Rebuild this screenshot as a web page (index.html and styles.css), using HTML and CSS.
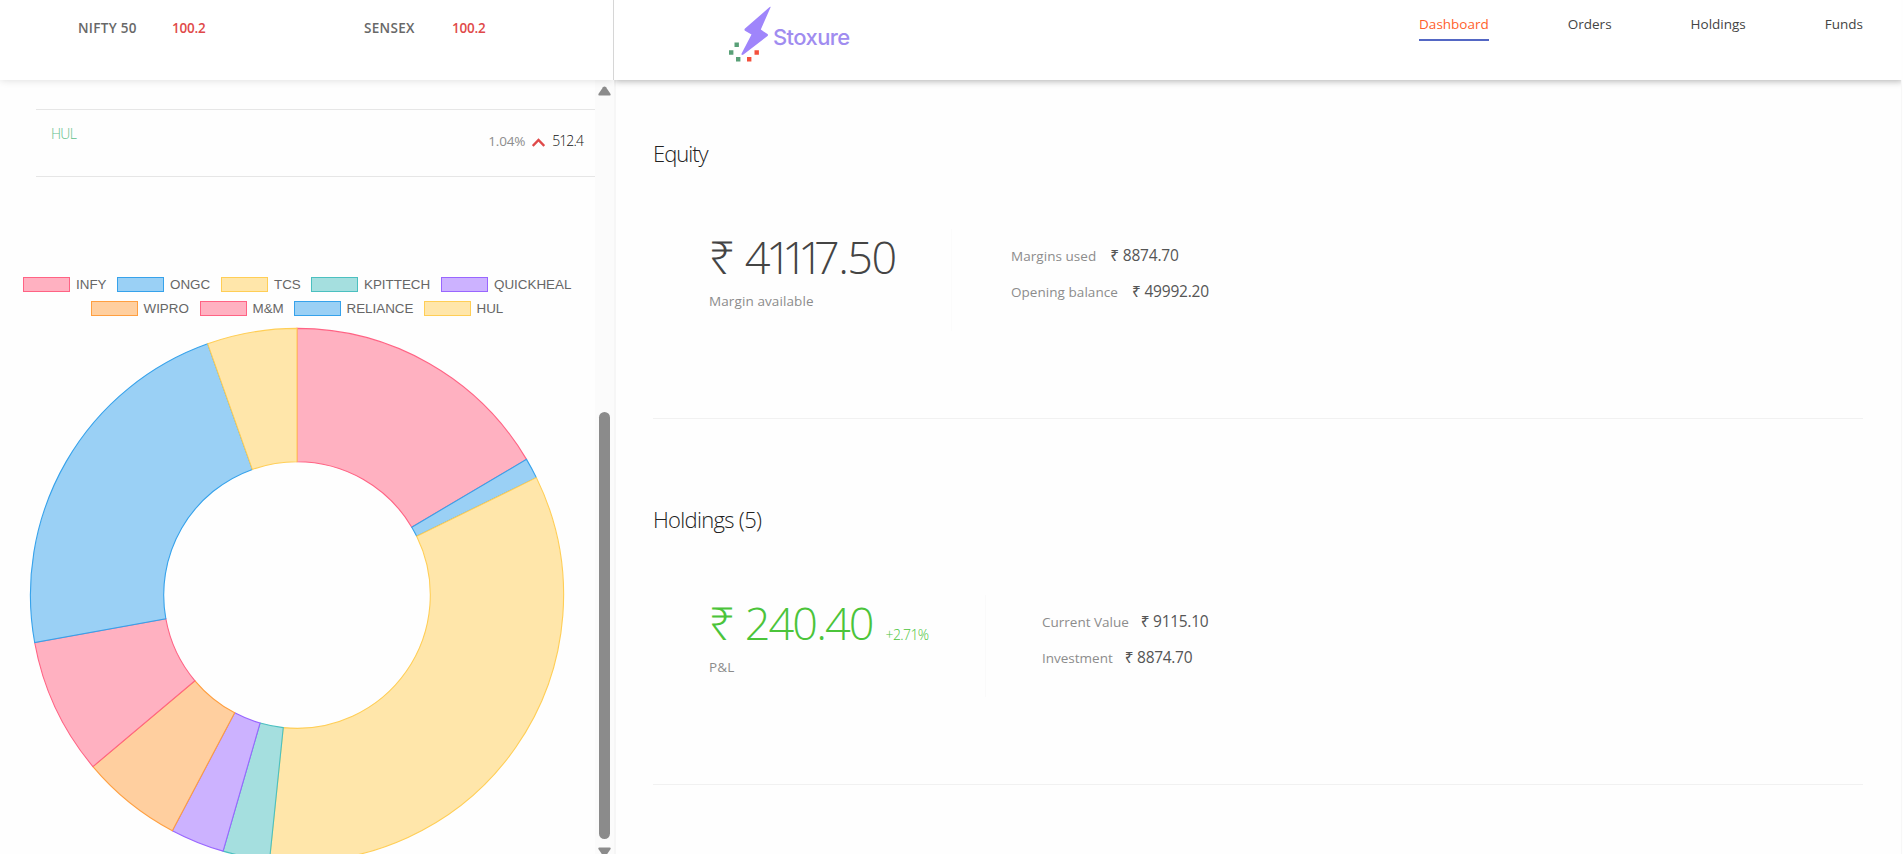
FILE: index.html
```html
<!DOCTYPE html>
<html lang="en">
<head>
<meta charset="utf-8">
<title>Stoxure</title>
<link rel="stylesheet" href="styles.css">
</head>
<body>
<div class="app">
  <aside class="side">
    <header class="indices">
      <span class="index-name nifty">NIFTY 50</span><span class="index-val">100.2</span>
      <span class="index-name sensex">SENSEX</span><span class="index-val">100.2</span>
    </header>
    <div class="side-body">
      <div class="watch">
        <div class="stock">
          <span class="stock-name">HUL</span>
          <span class="stock-pct">1.04%</span>
          <svg class="chev" width="13" height="9" viewBox="0 0 13 9"><path d="M.7 8 6.500 2l5.800 6" fill="none" stroke="#df4949" stroke-width="2.500"/></svg>
          <span class="stock-price">512.4</span>
        </div>
        <div class="legend">
          <div class="legend-row">
            <span class="key"><i class="box red"></i><b class="l-infy">INFY</b></span>
            <span class="key"><i class="box blue"></i><b class="l-ongc">ONGC</b></span>
            <span class="key"><i class="box yellow"></i><b class="l-tcs">TCS</b></span>
            <span class="key"><i class="box teal"></i><b class="l-kpit">KPITTECH</b></span>
            <span class="key"><i class="box purple"></i><b class="l-quick">QUICKHEAL</b></span>
          </div>
          <div class="legend-row second">
            <span class="key"><i class="box orange"></i><b class="l-wipro">WIPRO</b></span>
            <span class="key"><i class="box red"></i><b class="l-mm">M&amp;M</b></span>
            <span class="key"><i class="box blue"></i><b class="l-rel">RELIANCE</b></span>
            <span class="key"><i class="box yellow"></i><b class="l-hul">HUL</b></span>
          </div>
        </div>
        <svg class="donut" id="donut" width="536" height="536" viewBox="-268 -268 536 536"></svg>
      </div>
      <div class="scroll">
        <svg class="arrow-up" width="13" height="10" viewBox="0 0 13 10"><path d="M6.5.4Q7.4.4 8 1.2L12.6 8Q13 9.6 11.6 9.6H1.4Q0 9.6.4 8L5 1.2Q5.600.4 6.500.4Z" fill="#8b8b8b"/></svg>
        <div class="thumb"></div>
        <svg class="arrow-down" width="13" height="10" viewBox="0 0 13 10"><path d="M6.500 9.600Q5.600 9.600 5 8.800L.4 2Q0 .4 1.400.4H11.600Q13 .4 12.600 2L8 8.800Q7.400 9.600 6.500 9.600Z" fill="#8b8b8b"/></svg>
      </div>
    </div>
  </aside>
  <div class="main">
    <header class="topbar">
      <div class="brand">
        <svg width="42" height="60" viewBox="28 0 42 60"><path d="M70.500 7.400 60.800 29.600 67.500 34Q68.500 34.900 67.500 35.900L43.500 54.600Q41.200 55.800 41.600 53.600L51.500 34.600 45 30.800Q43.900 29.700 45 28.600L68.500 8Q71.200 5.600 70.500 7.400Z" fill="#9f85fb"/><g fill="#59a077"><path d="M34.500 42.500h4.400v4.400h-4.400zM29 50.300h4.400v4.400H29zM36 57h4.400v4.400H36z"/></g><g fill="#f4503c"><path d="M54.500 50.300h4.400v4.400h-4.400zM47 57h4.400v4.400H47z"/></g></svg>
        <span class="brand-name">Stoxure</span>
      </div>
      <nav class="nav">
        <a class="active">Dashboard</a><a>Orders</a><a>Holdings</a><a>Funds</a>
      </nav>
    </header>
    <main class="content">
      <section class="card">
        <h2 class="title t-eq">Equity</h2>
        <div class="row">
          <div class="left eq">
            <div class="amount"><span class="big"><span class="rupee">₹&nbsp;</span><span class="four">4</span><span class="ones">111</span>7.50</span></div>
            <p class="sub">Margin available</p>
          </div>
          <div class="right r1">
            <p><span class="lab">Margins used</span><span class="val">₹ 8874.70</span></p>
            <p><span class="lab">Opening balance</span><span class="val">₹ 49992.20</span></p>
          </div>
        </div>
      </section>
      <section class="card">
        <h2 class="title t-ho">Holdings (5)</h2>
        <div class="row">
          <div class="left ho">
            <div class="amount green"><span class="big b2"><span class="rupee">₹&nbsp;</span>240.40</span><span class="pct">+2.71%</span></div>
            <p class="sub pl">P&amp;L</p>
          </div>
          <div class="right r2">
            <p><span class="lab">Current Value</span><span class="val">₹ 9115.10</span></p>
            <p><span class="lab">Investment</span><span class="val">₹ 8874.70</span></p>
          </div>
        </div>
      </section>
    </main>
  </div>
</div>
<script src="chart.js"></script>
</body>
</html>
```

FILE: styles.css
```css
* { box-sizing: border-box; }
body { margin: 0; background: #fff; font-family: "Open Sans", "Noto Sans", sans-serif; overflow: hidden; }
p, h2 { margin: 0; }
.app { display: flex; width: 1903px; height: 854px; overflow: hidden; background: #fefefe; }

.side { width: 614px; flex: none; display: flex; flex-direction: column; }
.indices { height: 80px; flex: none; display: flex; align-items: flex-start; padding: 18px 0 0 78px; border-right: 1px solid #d6d6d6; background: #fff; box-shadow: 0 0 8px rgba(0,0,0,.14); position: relative; font-size: 13.500px; line-height: 20px; font-weight: 600; white-space: nowrap; clip-path: inset(0 0 -8px 0); }
.index-name { color: #686868; letter-spacing: .3px; }
.nifty { width: 94px; }
.sensex { width: 88px; }
.index-val { color: #df4949; width: 192px; letter-spacing: -.2px; }
.index-val:last-child { width: auto; }
.side-body { flex: 1; min-height: 0; display: flex; }
.watch { width: 595px; flex: none; overflow: hidden; padding-top: 29px; }
.stock { margin-left: 36px; height: 68px; border-top: 1px solid #e6e6e6; border-bottom: 1px solid #e6e6e6; display: flex; align-items: flex-start; padding: 14px 12px 0 15px; font-weight: 300; font-size: 14px; line-height: 20px; }
.stock-name { color: #5fc08b; flex: 1; letter-spacing: -.7px; }
.stock-pct { color: #8d8d8d; margin: 7px 7px 0 0; font-weight: 400; font-size: 13.500px; letter-spacing: -.2px; }
.chev { margin: 14px 7px 0 0; }
.stock-price { color: #111; margin-top: 7px; letter-spacing: -.9px; }

.legend { margin-top: 98.500px; font-family: "Liberation Sans", Arial, sans-serif; font-size: 13.400px; line-height: 17px; color: #666; }
.legend-row { display: flex; justify-content: flex-start; padding-left: 23px; height: 24.500px; gap: 10px; }
.legend-row.second { padding-left: 90.500px; }
.key { display: flex; align-items: center; height: 17px; flex: none; }
.key b { font-weight: 400; margin-left: 6px; white-space: nowrap; }
.l-infy { width: 31px; } .l-ongc { width: 41px; } .l-tcs { width: 27px; } .l-kpit { width: 67px; } .l-quick { width: 79px; }
.l-wipro { width: 46px; } .l-mm { width: 31px; } .l-rel { width: 67px; }
.box { width: 47px; height: 15px; border: 1px solid; flex: none; }
.red { background: #ffb1c1; border-color: #ff6384; }
.blue { background: #9ad0f5; border-color: #36a2eb; }
.yellow { background: #ffe6aa; border-color: #ffce56; }
.teal { background: #a5dfdf; border-color: #4bc0c0; }
.purple { background: #ccb2ff; border-color: #9966ff; }
.orange { background: #ffcf9f; border-color: #ff9f40; }
.donut { display: block; margin: 2px 0 0 29px; }

.scroll { width: 19px; background: #fbfbfb; display: flex; flex-direction: column; align-items: center; padding-top: 6px; }
.arrow-up, .arrow-down { flex: none; }
.thumb { width: 11px; height: 427px; flex: none; margin: 316px 0 8px; border-radius: 6px; background: #8b8b8b; }

.main { flex: 1; display: flex; flex-direction: column; }
.topbar { height: 80px; flex: none; display: flex; justify-content: space-between; background: #fff; box-shadow: 0 1px 7px rgba(0,0,0,.32); clip-path: inset(0 2px -12px 0); position: relative; }
.brand { display: flex; padding-left: 114px; }
.brand svg { overflow: visible; }
.brand-name { margin: 22px 0 0 3px; font-family: Inter, sans-serif; font-size: 22px; line-height: 30px; font-weight: 500; color: #a08cf0; letter-spacing: -.6px; }
.nav { display: flex; padding: 14px 40px 0 0; gap: 79px; font-size: 13.500px; line-height: 20px; color: #444; }
.nav a { height: 27px; }
.nav .active { color: #ff5f2c; border-bottom: 2px solid #5367c4; }

.content { flex: 1; padding: 0 38px 0 37px; border-left: 2px solid #f6f6f6; margin-right: 2px; box-shadow: 1px 0 0 #f7f7f7; }
.card { height: 366px; border-bottom: 1px solid #f1f1f1; padding-top: 84px; }
.card:first-child { height: 339px; padding-top: 57px; }
.title { font-weight: 300; font-size: 22px; line-height: 32px; color: #222; letter-spacing: -.7px; }
.t-eq { letter-spacing: -1px; }
.row { display: flex; padding-left: 56px; margin-top: 60px; }
.left { height: 102px; white-space: nowrap; }
.eq { width: 243px; border-right: 1px solid #fbfbfb; }
.ho { width: 277px; border-right: 1px solid #fafafa; }
.amount { display: flex; align-items: baseline; height: 56px; color: #444; line-height: 56px; font-weight: 300; }
.big { font-size: 45px; letter-spacing: -1.500px; }
.b2 { letter-spacing: -1.900px; }
.rupee { letter-spacing: -.800px; }
.four { letter-spacing: -4.500px; }
.ones { letter-spacing: -9.700px; }
.pct { font-size: 14px; margin-left: 13px; letter-spacing: -.6px; }
.green { color: #4bc43a; }
.sub { margin-top: 6px; font-size: 13.500px; line-height: 20px; color: #8c8c8c; letter-spacing: .1px; }
.right { padding-top: 16px; display: flex; flex-direction: column; gap: 16px; line-height: 20px; white-space: nowrap; }
.r1 { padding-left: 59px; }
.r2 { padding-left: 56px; }
.right p { display: flex; align-items: baseline; height: 20px; }
.lab { font-size: 13.500px; color: #8c8c8c; }
.val { font-size: 15.500px; color: #555; margin-left: 12px; letter-spacing: -.3px; }
.r1 .lab { letter-spacing: .05px; }
.r1 .val { margin-left: 14px; letter-spacing: -.2px; }
```

FILE: chart.js
```js
const stocks = [
  ["INFY", 1555.45, "red"], ["ONGC", 116.8, "blue"], ["TCS", 3194.8, "yellow"],
  ["KPITTECH", 266.45, "teal"], ["QUICKHEAL", 308.55, "purple"], ["WIPRO", 577.75, "orange"],
  ["M&M", 779.8, "red"], ["RELIANCE", 2112.4, "blue"], ["HUL", 512.4, "yellow"]
];
const colors = {
  red: ["#ffb1c1", "#ff6384"], blue: ["#9ad0f5", "#36a2eb"], yellow: ["#ffe6aa", "#ffce56"],
  teal: ["#a5dfdf", "#4bc0c0"], purple: ["#ccb2ff", "#9966ff"], orange: ["#ffcf9f", "#ff9f40"]
};
const R = 266.6, r = 133.3;
const total = stocks.reduce((s, x) => s + x[1], 0);
const pt = (a, rad) => (Math.sin(a) * rad).toFixed(2) + " " + (-Math.cos(a) * rad).toFixed(2);
let from = 0;
for (const [, price, color] of stocks) {
  const to = from + price / total * 2 * Math.PI;
  const large = to - from > Math.PI ? 1 : 0;
  const p = document.createElementNS("http://www.w3.org/2000/svg", "path");
  p.setAttribute("d", `M${pt(from, R)}A${R} ${R} 0 ${large} 1 ${pt(to, R)}L${pt(to, r)}A${r} ${r} 0 ${large} 0 ${pt(from, r)}Z`);
  p.setAttribute("fill", colors[color][0]);
  p.setAttribute("stroke", colors[color][1]);
  p.setAttribute("stroke-width", "1.1");
  document.getElementById("donut").appendChild(p);
  from = to;
}
```
